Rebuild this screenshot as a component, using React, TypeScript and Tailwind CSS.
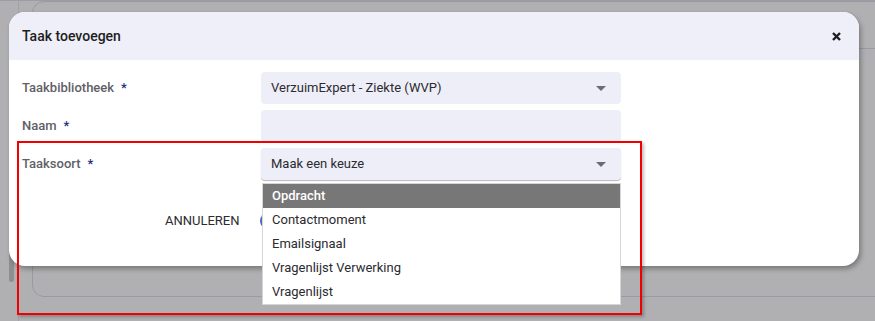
import React from 'react'

const options = ['Opdracht', 'Contactmoment', 'Emailsignaal', 'Vragenlijst Verwerking', 'Vragenlijst']

function Caret() {
  return (
    <svg width="10" height="5" viewBox="0 0 10 5" className="shrink-0">
      <path d="M0 0h10L5 5z" fill="#6b6b72" />
    </svg>
  )
}

function Field({ label, value, focused }: { label: string; value?: string; focused?: boolean }) {
  return (
    <>
      <div className="flex items-center text-[13px] font-medium text-[#5f6066]">
        {label}
        <span className="ml-[7px] text-[#1c2f7a]">*</span>
      </div>
      <div
        className={`flex h-[32px] items-center justify-between rounded-[4px] bg-[#eeeef8] pl-[10px] pr-[15px] text-[13px] text-[#2b2b30] ${
          focused ? 'shadow-[0_1px_1px_rgba(0,0,0,0.28)]' : ''
        }`}
      >
        <span>{value}</span>
        {value !== undefined && <Caret />}
      </div>
    </>
  )
}

export default function App() {
  return (
    <div
      className="relative h-[321px] w-[875px] overflow-hidden bg-[#b0afb1]"
      style={{ fontFamily: 'Roboto, "Liberation Sans", sans-serif' }}
    >
      {/* page behind the overlay */}
      <div className="absolute left-0 top-0 h-px w-full bg-[#9d9ca3]" />
      <div className="absolute left-[18px] top-0 h-full w-px bg-[#a2a1a5]" />
      <div className="absolute left-[9px] top-[60px] h-[222px] w-[5px] rounded-full bg-[#8e8e90]" />
      <div className="absolute left-[32px] top-[1px] h-[296px] w-[900px] rounded-[12px] border border-[#9b9aa3]" />
      <div className="absolute left-[835px] top-[48px] h-px w-[40px] bg-[#9b9aa3]" />

      {/* modal */}
      <div className="relative ml-[9px] mt-[12px] w-[850px] overflow-hidden rounded-[16px] bg-white shadow-[2px_3px_5px_rgba(0,0,0,0.3)]">
        <div className="flex h-[48px] items-center justify-between bg-[#efeff9] pl-[13px] pr-[18px]">
          <span className="text-[14px] font-medium text-[#1d1d22]">Taak toevoegen</span>
          <svg width="9" height="9" viewBox="0 0 9 9">
            <path d="M1 1l7 7M8 1L1 8" stroke="#1d1d22" strokeWidth="2.4" />
          </svg>
        </div>
        <div className="grid grid-cols-[239px_360px] gap-y-[6px] pl-[13px] pt-[12px]">
          <Field label="Taakbibliotheek" value="VerzuimExpert - Ziekte (WVP)" />
          <Field label="Naam" />
          <Field label="Taaksoort" value="Maak een keuze" focused />
        </div>
        <div className="flex h-[86px] items-center gap-[11px] pb-[4px] pl-[147px]">
          <button className="h-[36px] px-[9px] text-[13px] text-[#2b2b30]">ANNULEREN</button>
          <button aria-label="Opslaan" className="h-[16px] w-[110px] rounded-full bg-[#4a68c4]" />
        </div>
      </div>

      {/* open select list */}
      <ul className="absolute left-[262px] top-[183px] w-[359px] border border-[#d6d6da] bg-white py-0 text-[13px] text-[#2b2b30]">
        {options.map((o, i) => (
          <li
            key={o}
            className={`flex h-[24px] items-center px-[9px] ${i === 0 ? 'bg-[#777777] font-medium text-white' : ''}`}
          >
            {o}
          </li>
        ))}
      </ul>

      {/* annotation */}
      <div className="pointer-events-none absolute left-[17px] top-[141px] h-[174px] w-[625px] border-2 border-[#f20000] shadow-[2px_2px_3px_rgba(0,0,0,0.25)]" />
    </div>
  )
}
